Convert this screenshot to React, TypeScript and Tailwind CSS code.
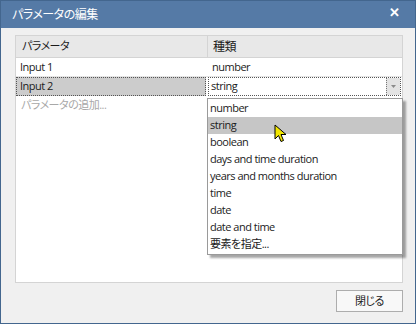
import React from 'react'

const types = [
  'number',
  'string',
  'boolean',
  'days and time duration',
  'years and months duration',
  'time',
  'date',
  'date and time',
  '要素を指定...',
]

function Cursor() {
  return (
    <svg width="14" height="20" viewBox="0 0 14 20" className="absolute left-[274px] top-[124px]">
      <path
        d="M1 1 L1 15 L4.5 11.5 L7 17.5 L9.5 16.5 L7 10.5 L12 10.5 Z"
        fill="#f2e600"
        stroke="#000"
        strokeWidth="1"
        strokeLinejoin="miter"
      />
    </svg>
  )
}

export default function App() {
  return (
    <div className="w-[416px] h-[325px] relative bg-white text-[11px] tracking-[-0.5px] text-[#1b1b1b] whitespace-nowrap [font-family:'Open_Sans','Noto_Sans_CJK_JP',sans-serif] [font-feature-settings:'palt']">
      <div className="w-[416px] h-[324px] flex flex-col bg-[#f0f0f0] border border-[#43668e]">
        {/* title bar */}
        <div className="h-[27px] shrink-0 bg-[#557aa6] flex items-center justify-between pl-[11px] pr-[16px] text-white">
          <span className="text-[12px] leading-none">パラメータの編集</span>
          <span className="text-[13px] font-bold leading-none -mt-[4px]">✕</span>
        </div>

        <div className="flex-1 flex flex-col pl-[14px] pr-[12px] pt-[7px] pb-[11px]">
          {/* grid */}
          <div className="flex-1 bg-white border border-[#d4d4d4] flex flex-col">
            <div className="h-[22px] grid grid-cols-[192px_1fr] bg-[#e8e8e8] border-b border-[#d4d4d4]">
              <div className="pl-[6px] flex items-center border-r border-[#d4d4d4]">パラメータ</div>
              <div className="pl-[5px] flex items-center text-[12px]">種類</div>
            </div>
            <div className="h-[19px] grid grid-cols-[192px_1fr] border-b border-[#e4e4e4]">
              <div className="pl-[4px] flex items-center">Input 1</div>
              <div className="pl-[4px] flex items-center">number</div>
            </div>
            <div className="h-[19px] grid grid-cols-[192px_1fr]">
              <div className="mr-[2px] pl-[3px] flex items-center bg-[#cccccc] border border-dotted border-[#555]">
                Input 2
              </div>
              <div className="mr-[1px] flex border border-dotted border-[#555] bg-white">
                <div className="flex-1 pl-[2px] flex items-center">string</div>
                <div className="w-[14px] bg-[#e3e3e3] border-l border-dotted border-[#777] flex items-center justify-center">
                  <svg width="5" height="3" viewBox="0 0 5 3">
                    <path d="M0 0 L5 0 L2.5 3 Z" fill="#8a8a8a" />
                  </svg>
                </div>
              </div>
            </div>
            <div className="h-[19px] pl-[5px] flex items-center text-[#a8a8a8]">パラメータの追加...</div>
          </div>

          {/* footer */}
          <div className="flex justify-end mt-[7px]">
            <button className="w-[67px] h-[22px] border border-[#adadad] bg-[#f8f8f8] flex items-center justify-center">
              閉じる
            </button>
          </div>
        </div>
      </div>

      {/* dropdown list */}
      <div className="absolute left-[207px] top-[98px] w-[196px] bg-white border border-[#9a9a9a] py-[1px] shadow-[3px_3px_2px_rgba(0,0,0,0.35)]">
        {types.map((t) => (
          <div
            key={t}
            className={'h-[17px] pl-[2px] flex items-center ' + (t === 'string' ? 'bg-[#c6c6c6]' : '')}
          >
            {t}
          </div>
        ))}
      </div>

      <Cursor />
    </div>
  )
}
